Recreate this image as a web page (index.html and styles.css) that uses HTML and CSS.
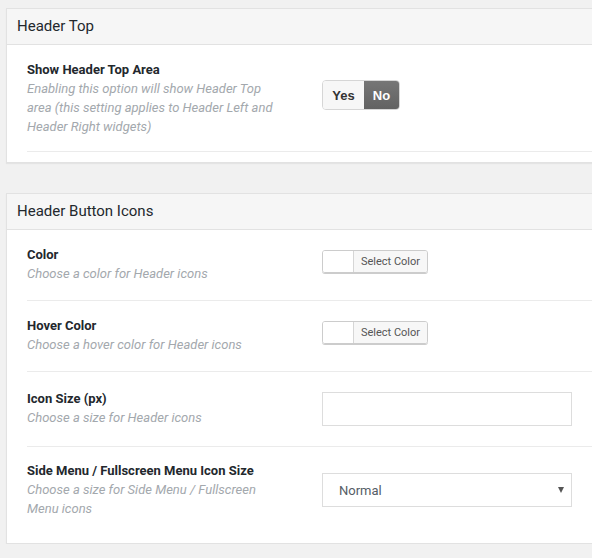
FILE: index.html
```html
<!DOCTYPE html>
<html>
<head>
<meta charset="utf-8">
<link rel="stylesheet" href="styles.css">
</head>
<body>
<div class="page">
  <section class="panel">
    <h2 class="panel-title">Header Top</h2>
    <div class="panel-body">
      <div class="row row-first">
        <div class="info">
          <div class="label">Show Header Top Area</div>
          <div class="desc">Enabling this option will show Header Top area (this setting applies to Header Left and Header Right widgets)</div>
        </div>
        <div class="control">
          <div class="toggle">
            <span class="opt">Yes</span>
            <span class="opt opt-on">No</span>
          </div>
        </div>
      </div>
    </div>
  </section>

  <section class="panel panel-2">
    <h2 class="panel-title">Header Button Icons</h2>
    <div class="panel-body">
      <div class="row">
        <div class="info">
          <div class="label">Color</div>
          <div class="desc">Choose a color for Header icons</div>
        </div>
        <div class="control">
          <div class="color-btn"><span class="swatch"></span><span class="color-txt">Select Color</span></div>
        </div>
      </div>
      <div class="row">
        <div class="info">
          <div class="label">Hover Color</div>
          <div class="desc">Choose a hover color for Header icons</div>
        </div>
        <div class="control">
          <div class="color-btn"><span class="swatch"></span><span class="color-txt">Select Color</span></div>
        </div>
      </div>
      <div class="row row-input">
        <div class="info">
          <div class="label">Icon Size (px)</div>
          <div class="desc">Choose a size for Header icons</div>
        </div>
        <div class="control">
          <div class="text-input"></div>
        </div>
      </div>
      <div class="row row-last">
        <div class="info">
          <div class="label">Side Menu / Fullscreen Menu Icon Size</div>
          <div class="desc">Choose a size for Side Menu / Fullscreen Menu icons</div>
        </div>
        <div class="control">
          <div class="select"><span class="select-txt">Normal</span><span class="caret"></span></div>
        </div>
      </div>
    </div>
  </section>
</div>
</body>
</html>
```
FILE: styles.css
```css
html, body {
  margin: 0;
  padding: 0;
  background: #f1f1f1;
  overflow: hidden;
}
body {
  font-family: Roboto, "Noto Sans", sans-serif;
  color: #23282d;
}
.page {
  padding: 8px 0 0 6px;
  width: 586px;
}
.panel {
  background: #fff;
  border: 1px solid #e2e2e2;
  border-right: none;
  box-shadow: 0 1px 1px rgba(0,0,0,0.05);
}
.panel-2 {
  margin-top: 30px;
}
.panel-title {
  margin: 0;
  height: 35px;
  line-height: 34px;
  padding-left: 10px;
  font-size: 15px;
  font-weight: 400;
  background: #f6f6f6;
  border-bottom: 1px solid #e2e2e2;
  color: #23282d;
}
.panel-body {
  padding: 0 0 0 20px;
}
.row {
  display: flex;
  align-items: center;
  border-bottom: 1px solid #ebebeb;
  padding: 16px 0 17px;
}
.row-first {
  padding: 16px 0 15px;
  margin-bottom: 10px;
}
.row-input {
  padding: 18px 0 19px;
}
.row-last {
  border-bottom: none;
  padding: 15px 0 25px;
}
.info {
  width: 255px;
  flex: none;
  margin-right: 40px;
}
.label {
  font-size: 13px;
  font-weight: 700;
  line-height: 18px;
  color: #23282d;
}
.desc {
  font-size: 13px;
  font-style: italic;
  line-height: 19px;
  color: #a3a8ad;
}
.control {
  flex: none;
}
.toggle {
  display: flex;
  width: 76px;
  height: 28px;
  margin-bottom: 7px;
  border: 1px solid #d6d6d6;
  border-radius: 4px;
  overflow: hidden;
  font-family: "Liberation Sans", Arial, sans-serif;
  font-weight: 700;
  font-size: 13px;
}
.opt {
  display: flex;
  align-items: center;
  justify-content: center;
  width: 41px;
  background: #f7f7f7;
  color: #333;
}
.opt-on {
  width: 35px;
  background: linear-gradient(#767676, #626262);
  color: #fff;
}
.color-btn {
  display: flex;
  width: 104px;
  height: 21px;
  margin-bottom: 6px;
  border: 1px solid #cccccc;
  border-radius: 3px;
  box-shadow: 0 1px 0 #cccccc;
  overflow: hidden;
}
.swatch {
  width: 30px;
  background: #fff;
  border-right: 1px solid #d6d6d6;
}
.color-txt {
  flex: 1;
  background: #f7f7f7;
  font-size: 11px;
  line-height: 21px;
  text-align: center;
  color: #555;
}
.text-input {
  width: 248px;
  height: 32px;
  border: 1px solid #dddddd;
  background: #fff;
}
.select {
  display: flex;
  align-items: center;
  justify-content: space-between;
  width: 248px;
  height: 32px;
  border: 1px solid #dddddd;
  background: #fff;
}
.select-txt {
  padding-left: 16px;
  font-size: 13px;
  color: #555d66;
}
.caret {
  width: 0;
  height: 0;
  margin-right: 7px;
  border-left: 3.5px solid transparent;
  border-right: 3.5px solid transparent;
  border-top: 6px solid #555;
}
```
